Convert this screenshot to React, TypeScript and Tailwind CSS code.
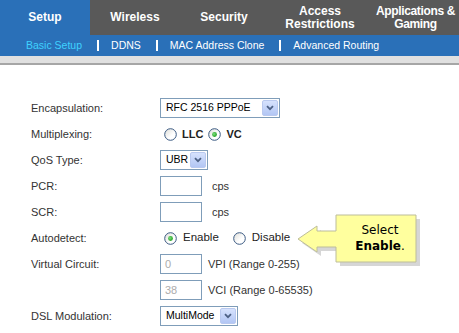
import React from 'react'

const font = { fontFamily: '"Liberation Sans", Arial, sans-serif' }

function Radio({ checked }: { checked?: boolean }) {
  return (
    <svg width="13" height="13" viewBox="0 0 13 13" className="shrink-0">
      <defs>
        <linearGradient id="rg" x1="0" y1="0" x2="1" y2="1">
          <stop offset="0" stopColor="#dcdcd7" />
          <stop offset="0.6" stopColor="#ffffff" />
        </linearGradient>
        <radialGradient id="dot" cx="0.4" cy="0.4" r="0.6">
          <stop offset="0" stopColor="#7fe07f" />
          <stop offset="1" stopColor="#21a121" />
        </radialGradient>
      </defs>
      <circle cx="6.5" cy="6.5" r="5.8" fill="url(#rg)" stroke="#3b5a82" strokeWidth="1" />
      {checked && <circle cx="6.5" cy="6.5" r="2.4" fill="url(#dot)" />}
    </svg>
  )
}

function Select({ value, width }: { value: string; width: string }) {
  return (
    <div className={`${width} h-[20px] border border-[#7f9db9] bg-white flex items-center justify-between pl-[5px] pr-[1px]`}>
      <span className="text-[10.5px] text-black">{value}</span>
      <div className="w-[16px] h-[16px] rounded-[2px] border border-[#b9c9ef] bg-gradient-to-b from-[#d6e2fd] to-[#b2c6f4] flex items-center justify-center">
        <svg width="8" height="6" viewBox="0 0 8 6">
          <path d="M1 1.2 L4 4.2 L7 1.2" fill="none" stroke="#4d6185" strokeWidth="1.8" />
        </svg>
      </div>
    </div>
  )
}

function TextBox({ value }: { value?: string }) {
  return (
    <div className="w-[42px] h-[20px] border border-[#7f9db9] bg-white flex items-center pl-[4px] text-[11px] text-[#acacac]">
      {value}
    </div>
  )
}

function Row({ label, children }: { label: string; children?: React.ReactNode }) {
  return (
    <div className="flex items-center h-[26px]">
      <div className="w-[129px] text-[11px] text-[#333333]">{label}</div>
      <div className="flex items-center">{children}</div>
    </div>
  )
}

const tabs = [
  { label: 'Setup', w: 'w-[90px]', active: true },
  { label: 'Wireless', w: 'w-[90px]' },
  { label: 'Security', w: 'w-[88px]' },
  { label: 'Access\nRestrictions', w: 'w-[104px]' },
  { label: 'Applications &\nGaming', w: 'w-[87px] tracking-[-0.35px]' },
]

const subItems = ['Basic Setup', 'DDNS', 'MAC Address Clone', 'Advanced Routing']

export default function App() {
  return (
    <div className="relative w-[459px] h-[333px] overflow-hidden bg-white" style={font}>
      <div className="flex h-[35px] bg-[#595959]">
        {tabs.map((t) => (
          <div
            key={t.label}
            className={`${t.w} shrink-0 flex items-center justify-center text-center whitespace-pre-line leading-[13px] text-[12px] font-bold text-white ${t.active ? 'bg-[#2a70b8]' : ''}`}
          >
            {t.label}
          </div>
        ))}
      </div>

      <div className="flex items-center h-[21px] bg-[#2a70b8] pl-[26px] text-[10.5px]">
        {subItems.map((s, i) => (
          <React.Fragment key={s}>
            {i > 0 && <div className="w-[2px] h-[11px] bg-white ml-[15px] mr-[12px]" />}
            <span className={i === 0 ? 'text-[#3fd2ff]' : 'text-white'}>{s}</span>
          </React.Fragment>
        ))}
      </div>

      <div className="h-[9px] bg-[#e0e0e0] border-b-2 border-[#a6a6a6]" />

      <div className="pt-[30px] pl-[31px]">
        <Row label="Encapsulation:">
          <Select value="RFC 2516 PPPoE" width="w-[120px]" />
        </Row>
        <Row label="Multiplexing:">
          <div className="flex items-center pl-[4px] text-[11px] font-bold text-[#222]">
            <Radio />
            <span className="ml-[5px]">LLC</span>
            <span className="ml-[5px]"><Radio checked /></span>
            <span className="ml-[5px]">VC</span>
          </div>
        </Row>
        <Row label="QoS Type:">
          <Select value="UBR" width="w-[48px]" />
        </Row>
        <Row label="PCR:">
          <TextBox />
          <span className="ml-[10px] text-[11px] text-[#333]">cps</span>
        </Row>
        <Row label="SCR:">
          <TextBox />
          <span className="ml-[10px] text-[11px] text-[#333]">cps</span>
        </Row>
        <Row label="Autodetect:">
          <div className="flex items-center pl-[4px] text-[11.5px] text-[#222]">
            <Radio checked />
            <span className="ml-[6px]">Enable</span>
            <span className="ml-[14px]"><Radio /></span>
            <span className="ml-[6px]">Disable</span>
          </div>
        </Row>
        <Row label="Virtual Circuit:">
          <TextBox value="0" />
          <span className="ml-[6px] text-[11px] text-[#333]">VPI (Range 0-255)</span>
        </Row>
        <Row label="">
          <TextBox value="38" />
          <span className="ml-[6px] text-[11px] text-[#333]">VCI (Range 0-65535)</span>
        </Row>
        <Row label="DSL Modulation:">
          <Select value="MultiMode" width="w-[78px]" />
        </Row>
      </div>

      {/* callout */}
      <div className="absolute left-[296px] top-[212px] w-[128px] h-[56px]">
        <svg width="128" height="56" viewBox="0 0 128 56" className="absolute left-0 top-0">
          <polygon
            points="6,31 25,18 25,23 44,23 44,7 124,7 124,54 44,54 44,39 25,39 25,44"
            fill="#c4c4c4"
            opacity="0.7"
          />
          <polygon
            points="2,27 21,14 21,19 40,19 40,3 120,3 120,50 40,50 40,35 21,35 21,40"
            fill="#ffff9e"
            stroke="#bdbd9a"
            strokeWidth="1"
          />
        </svg>
        <div
          className="absolute left-[44px] top-[10px] w-[80px] text-center text-[12px] leading-[16px] text-black"
          style={{ fontFamily: '"DejaVu Sans", Verdana, sans-serif' }}
        >
          Select
          <br />
          <b>Enable</b>.
        </div>
      </div>
    </div>
  )
}
